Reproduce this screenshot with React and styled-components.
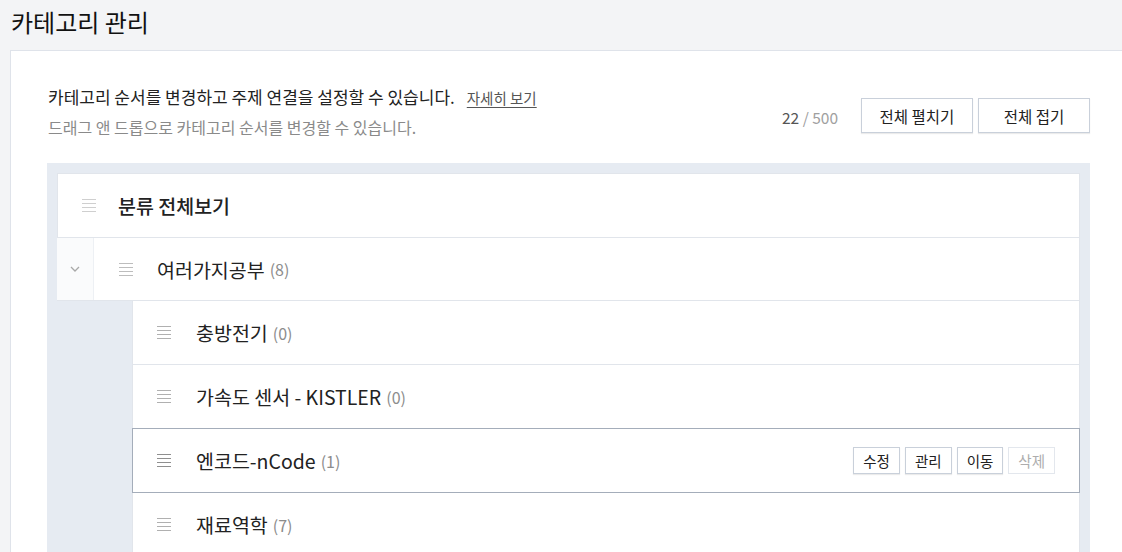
import React from "react";
import styled, { createGlobalStyle } from "styled-components";

const Global = createGlobalStyle`
  html, body {
    margin: 0;
    padding: 0;
    background: #f3f4f6;
    overflow: hidden;
  }
  body {
    font-family: "Noto Sans CJK KR", "Noto Sans", sans-serif;
    color: #222;
    width: 1122px;
    height: 552px;
  }
  * { box-sizing: border-box; }
`;

const Page = styled.div`
  width: 1122px;
  height: 552px;
  overflow: hidden;
`;

const PageTitle = styled.h1`
  margin: 0;
  padding: 6px 11px 12px;
  font-size: 24px;
  line-height: 32px;
  font-weight: 400;
  color: #111;
`;

const Card = styled.section`
  margin-left: 10px;
  width: 1120px;
  min-height: 600px;
  background: #fff;
  border: 1px solid #dfe3ea;
  border-right: none;
  padding: 35px 0 0 36px;
`;

const Head = styled.div`
  display: flex;
  align-items: flex-start;
  width: 1043px;
`;

const Intro = styled.div`
  flex: 1;
  padding-left: 1px;
`;

const Lead = styled.p`
  margin: 0;
  font-size: 17px;
  line-height: 22px;
  color: #222;
`;

const Sub = styled.p`
  margin: 7px 0 0;
  font-size: 16px;
  line-height: 22px;
  color: #8a8a8a;
`;

const MoreLink = styled.a`
  margin-left: 12px;
  font-size: 14.5px;
  color: #555;
  text-decoration: underline;
  text-underline-offset: 3px;
  cursor: pointer;
`;

const Tools = styled.div`
  display: flex;
  align-items: center;
  gap: 5px;
  margin-top: 12px;
`;

const Counter = styled.span`
  font-size: 15.5px;
  color: #555;
  margin-right: 18px;
  margin-top: 3px;
  span {
    color: #a0a0a0;
  }
`;

const TopButton = styled.button`
  width: 112px;
  height: 35px;
  background: #fff;
  border: 1px solid #c9d0da;
  box-shadow: 0 1px 1px rgba(0, 0, 0, 0.08);
  font-family: inherit;
  font-size: 15.5px;
  color: #222;
  cursor: pointer;
`;

const Tree = styled.div`
  margin-top: 25px;
  width: 1043px;
  background: #e6ebf2;
  padding: 10px 10px 0 10px;
  min-height: 420px;
`;

const Row = styled.div`
  position: relative;
  display: flex;
  align-items: center;
  height: ${(p) => (p.$first ? 65 : 63)}px;
  background: #fff;
  border: 1px solid #e1e5eb;
  border-top-width: ${(p) => (p.$first ? 1 : 0)}px;
  padding-left: ${(p) => p.$pad}px;
`;

const ChildRow = styled.div`
  position: relative;
  display: flex;
  align-items: center;
  height: 64px;
  background: #fff;
  border: 1px solid #e1e5eb;
  border-top: none;
  padding-left: 24px;
  padding-right: 24px;
  ${(p) =>
    p.$active &&
    `
    height: 65px;
    margin-top: -1px;
    border: 1px solid #a4adba;
    z-index: 1;
  `}
`;

const Toggle = styled.div`
  align-self: stretch;
  width: 37px;
  margin-left: -1px;
  display: flex;
  align-items: center;
  justify-content: center;
  background: #fafbfc;
  border-right: 1px solid #edf0f4;
  margin-right: 25px;
`;

const Children = styled.div`
  padding-left: 75px;
`;

const HandleBox = styled.span`
  display: inline-flex;
  width: 14px;
  margin-right: ${(p) => p.$gap}px;
  color: ${(p) => p.$color};
`;

const Label = styled.span`
  font-size: 19.5px;
  color: #222;
  font-weight: ${(p) => (p.$strong ? 500 : 400)};
`;

const Count = styled.span`
  margin-left: 5px;
  font-size: 16px;
  color: #8c8c8c;
`;

const Actions = styled.div`
  margin-left: auto;
  display: flex;
  gap: 5px;
`;

const ActionButton = styled.button`
  height: 27px;
  padding: 0 9px;
  background: #fff;
  border: 1px solid ${(p) => (p.disabled ? "#e3e7ed" : "#c9d0da")};
  box-shadow: ${(p) => (p.disabled ? "none" : "0 1px 1px rgba(0,0,0,0.08)")};
  font-family: inherit;
  font-size: 14.5px;
  color: ${(p) => (p.disabled ? "#adadad" : "#222")};
  cursor: pointer;
`;

const Handle = ({ color = "#b5b5b5", gap = 24 }) => (
  <HandleBox $gap={gap} $color={color}>
    <svg width="14" height="13" viewBox="0 0 14 13">
      {[0.5, 4.5, 8.5, 12.5].map((y) => (
        <line key={y} x1="0" y1={y} x2="14" y2={y} stroke="currentColor" strokeWidth="1" />
      ))}
    </svg>
  </HandleBox>
);

const Chevron = () => (
  <svg width="10" height="6" viewBox="0 0 10 6">
    <polyline points="1,1 5,5 9,1" fill="none" stroke="#a8a8a8" strokeWidth="1.3" />
  </svg>
);

const children = [
  { name: "충방전기", count: 0 },
  { name: "가속도 센서 - KISTLER", count: 0 },
  { name: "엔코드-nCode", count: 1, active: true },
  { name: "재료역학", count: 7 },
  { name: "수치해석", count: 0 },
];

export default function App() {
  return (
    <Page>
      <Global />
      <PageTitle>카테고리 관리</PageTitle>
      <Card>
        <Head>
          <Intro>
            <Lead>
              카테고리 순서를 변경하고 주제 연결을 설정할 수 있습니다.
              <MoreLink>자세히 보기</MoreLink>
            </Lead>
            <Sub>드래그 앤 드롭으로 카테고리 순서를 변경할 수 있습니다.</Sub>
          </Intro>
          <Tools>
            <Counter>
              22 <span>/ 500</span>
            </Counter>
            <TopButton>전체 펼치기</TopButton>
            <TopButton>전체 접기</TopButton>
          </Tools>
        </Head>
        <Tree>
          <Row $first $pad={24}>
            <Handle color="#cfcfcf" gap={22} />
            <Label $strong>분류 전체보기</Label>
          </Row>
          <Row $pad={0}>
            <Toggle>
              <Chevron />
            </Toggle>
            <Handle color="#bdbdbd" gap={24} />
            <Label>여러가지공부</Label>
            <Count>(8)</Count>
          </Row>
          <Children>
            {children.map((c) => (
              <ChildRow key={c.name} $active={c.active}>
                <Handle color={c.active ? "#8f8f8f" : "#b0b0b0"} gap={25} />
                <Label>{c.name}</Label>
                <Count>({c.count})</Count>
                {c.active && (
                  <Actions>
                    <ActionButton>수정</ActionButton>
                    <ActionButton>관리</ActionButton>
                    <ActionButton>이동</ActionButton>
                    <ActionButton disabled>삭제</ActionButton>
                  </Actions>
                )}
              </ChildRow>
            ))}
          </Children>
        </Tree>
      </Card>
    </Page>
  );
}
